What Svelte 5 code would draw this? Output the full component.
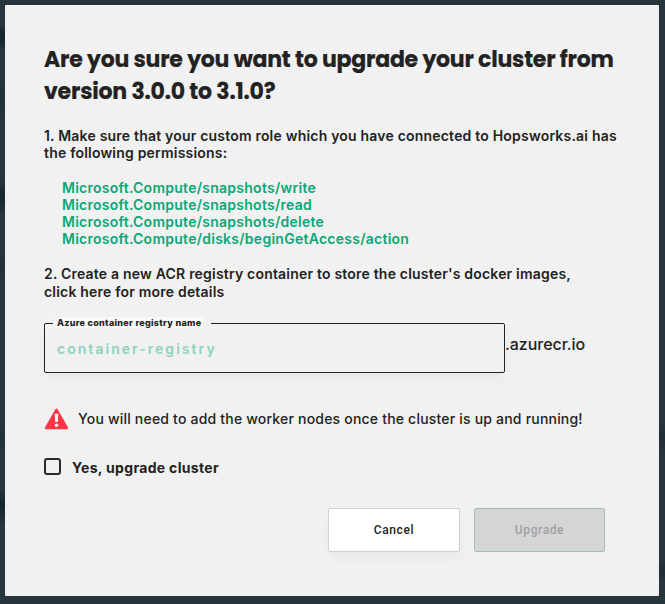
<script>
  const permissions = [
    'Microsoft.Compute/snapshots/write',
    'Microsoft.Compute/snapshots/read',
    'Microsoft.Compute/snapshots/delete',
    'Microsoft.Compute/disks/beginGetAccess/action'
  ];
  let registry = $state('');
  let confirmed = $state(false);
</script>

<main class="backdrop">
  <section class="dialog">
    <h1>
      <span class="title-first">Are you sure you want to upgrade your cluster from</span><br />
      <span class="title-second">version 3.0.0 to 3.1.0?</span>
    </h1>
    <p class="step role">1. Make sure that your custom role which you have connected to Hopsworks.ai has<br />the following permissions:</p>
    <ul>
      {#each permissions as permission}
        <li>{permission}</li>
      {/each}
    </ul>
    <p class="step acr">2. Create a new ACR registry container to store the cluster's docker images,<br />click here for more details</p>
    <div class="registry">
      <fieldset>
        <legend><span>Azure container registry name</span></legend>
        <input placeholder="container-registry" bind:value={registry} />
      </fieldset>
      <span class="suffix">.azurecr.io</span>
    </div>
    <div class="warning">
      <svg width="24" height="22" viewBox="0 0 24 22">
        <path d="M12.5 1.8 22.8 20H2.2Z" fill="#ff3545" stroke="#ff3545" stroke-width="2.6" stroke-linejoin="round" />
        <path d="M10.7 5.7h3.6l-.5 8.2h-2.6z" fill="#f1f1f1" />
        <circle cx="12.5" cy="17.2" r="1.8" fill="#f1f1f1" />
      </svg>
      <span>You will need to add the worker nodes once the cluster is up and running!</span>
    </div>
    <label class="confirm">
      <input type="checkbox" bind:checked={confirmed} />
      <span>Yes, upgrade cluster</span>
    </label>
    <div class="actions">
      <button class="cancel">Cancel</button>
      <button class="upgrade" disabled={!confirmed}>Upgrade</button>
    </div>
  </section>
</main>

<style>
  :global(body) {
    margin: 0;
    background: #27353c;
  }
  .backdrop {
    box-sizing: border-box;
    height: 604px;
    padding: 5px 6px 8px 5px;
    font-family: Inter, 'Liberation Sans', sans-serif;
    color: #222;
    background:
      linear-gradient(#27353c 25px, #14252c 34px, #14252c 40px, #27353c 50px, #27353c 82px, #1e3036 96px, #27353c 120px, #27353c 180px, #14252c 197px, #27353c 215px, #27353c 254px, #1e3036 265px, #27353c 280px, #27353c 425px, #1e3036 438px, #27353c 450px, #27353c 490px, #14252c 505px, #27353c 525px) 0 0 / 5px 604px no-repeat,
      linear-gradient(#27353c 420px, #1e2e35 439px, #27353c 455px, #27353c 558px, #1e2e34 571px, #27353c 582px) 100% 0 / 6px 604px no-repeat,
      #27353c;
  }
  .dialog {
    box-sizing: border-box;
    height: 591px;
    padding: 39px 39px 0;
    border-radius: 1px;
    background: #f1f1f1;
  }
  h1 {
    margin: 0;
    font: 700 22px/32px Poppins, Inter, sans-serif;
    -webkit-text-stroke: 0.2px #222;
    white-space: nowrap;
  }
  .title-first {
    letter-spacing: -0.22px;
  }
  .title-second {
    letter-spacing: -0.2px;
  }
  .step {
    margin: 0;
    font-size: 14px;
    font-weight: 600;
    letter-spacing: 0.2px;
    white-space: nowrap;
  }
  .role {
    padding-top: 19px;
    line-height: 17px;
  }
  ul {
    margin: 18px 0 0;
    padding: 0 0 0 18px;
    list-style: none;
    font-size: 14px;
    font-weight: 600;
    line-height: 17px;
    letter-spacing: 0.26px;
    color: #0aa777;
  }
  .acr {
    padding-top: 18px;
    line-height: 18px;
  }
  .registry {
    display: flex;
    align-items: flex-end;
    height: 72px;
  }
  fieldset {
    box-sizing: border-box;
    width: 461px;
    height: 55px;
    margin: 0;
    padding: 0 0 0 8px;
    border: 1px solid #222;
    border-radius: 2px;
    box-shadow: 0 7px 12px -2px rgba(50, 110, 90, 0.06);
  }
  legend {
    width: 158px;
    height: 10px;
    padding: 0;
    font-size: 9px;
    line-height: 10px;
    font-weight: 800;
    letter-spacing: 0.3px;
    white-space: nowrap;
  }
  legend span {
    margin-left: 2px;
    padding: 0 2px;
    background: #fafafa;
  }
  fieldset input {
    display: block;
    box-sizing: border-box;
    width: 440px;
    height: 34px;
    margin-top: 3px;
    padding: 0 4px;
    border: 0;
    outline: 0;
    background: transparent;
    font: 600 14px/20px Inter, sans-serif;
    letter-spacing: 2.04px;
    color: #222;
  }
  fieldset input::placeholder {
    color: #8dd3bc;
    opacity: 1;
  }
  .suffix {
    padding-bottom: 19px;
    font-size: 16px;
    line-height: 20px;
    font-weight: 500;
    letter-spacing: -0.05px;
  }
  .warning {
    display: flex;
    align-items: center;
    gap: 10px;
    margin-top: 35px;
    height: 22px;
    font-size: 14px;
    font-weight: 500;
    letter-spacing: 0.2px;
    white-space: nowrap;
  }
  .warning svg {
    flex: none;
    overflow: visible;
  }
  .warning span {
    margin-top: -2px;
  }
  .confirm {
    display: flex;
    align-items: center;
    gap: 11px;
    height: 20px;
    margin-top: 27px;
    font-size: 14px;
    font-weight: 700;
    letter-spacing: 0.32px;
  }
  .confirm input {
    appearance: none;
    box-sizing: border-box;
    width: 17px;
    height: 17px;
    margin: 0 0 2px;
    border: 2px solid #2b2b2b;
    border-radius: 3px;
  }
  .confirm input:checked {
    background: #222;
  }
  .actions {
    display: flex;
    justify-content: flex-end;
    gap: 14px;
    margin-top: 31px;
    padding-right: 15px;
  }
  button {
    box-sizing: border-box;
    height: 44px;
    padding: 0;
    border: 1px solid #d0d2d2;
    border-radius: 2px;
    font: 500 12px/16px Roboto, sans-serif;
    letter-spacing: 0.6px;
    color: #222;
  }
  .cancel {
    width: 132px;
    background: #fff;
    box-shadow: 0 7px 12px -2px rgba(50, 90, 80, 0.06);
  }
  .upgrade {
    width: 131px;
    background: #d5d5d5;
    border-color: #a9bcbc;
  }
  .upgrade:disabled {
    color: #a0a0a0;
  }
</style>
